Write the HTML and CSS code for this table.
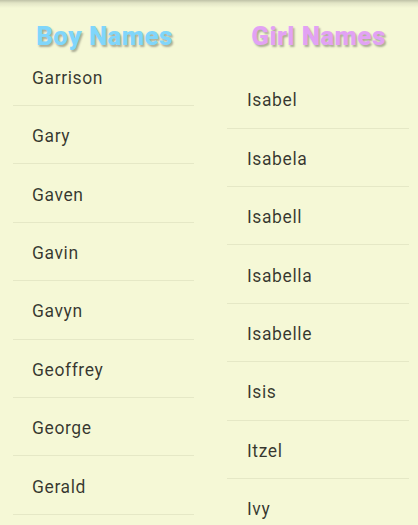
FILE: index.html
```html
<!DOCTYPE html>
<html>
<head>
<meta charset="utf-8">
<link rel="stylesheet" href="styles.css">
</head>
<body>
<div class="page">
  <section class="col col-boys">
    <h2 class="title title-boys">Boy Names</h2>
    <ul class="list">
      <li class="row">Garrison</li>
      <li class="row">Gary</li>
      <li class="row">Gaven</li>
      <li class="row">Gavin</li>
      <li class="row">Gavyn</li>
      <li class="row">Geoffrey</li>
      <li class="row">George</li>
      <li class="row">Gerald</li>
    </ul>
  </section>
  <section class="col col-girls">
    <h2 class="title title-girls">Girl Names</h2>
    <ul class="list">
      <li class="row">Isabel</li>
      <li class="row">Isabela</li>
      <li class="row">Isabell</li>
      <li class="row">Isabella</li>
      <li class="row">Isabelle</li>
      <li class="row">Isis</li>
      <li class="row">Itzel</li>
      <li class="row">Ivy</li>
    </ul>
  </section>
</div>
</body>
</html>
```
FILE: styles.css
```css
html, body {
  margin: 0;
  padding: 0;
}
body {
  width: 418px;
  height: 525px;
  overflow: hidden;
  font-family: Roboto, "Liberation Sans", sans-serif;
  background: linear-gradient(to bottom, rgba(0,0,0,0.22) 0px, rgba(0,0,0,0.08) 3px, rgba(0,0,0,0) 8px), #f5f8d6;
}
.page {
  display: grid;
  grid-template-columns: 209px 209px;
}
.col {
  display: flex;
  flex-direction: column;
}
.title {
  margin: 0;
  font-size: 26px;
  font-weight: 900;
  letter-spacing: 0.4px;
  line-height: 30px;
  text-align: center;
  text-shadow: 1.5px 1.5px 2px rgba(0,0,0,0.3);
}
.col-boys .title {
  padding-top: 21px;
  padding-left: 0;
}
.col-girls .title {
  padding-top: 21px;
  padding-left: 10px;
}
.title-boys { color: #80d6fb; }
.title-girls { color: #e2a2f4; }
.list {
  list-style: none;
  margin: 0;
  padding: 0;
}
.col-boys .list {
  margin: -3.4px 15px 0 13px;
}
.col-girls .list {
  margin: 19.2px 9px 0 18px;
}
.row {
  box-sizing: border-box;
  height: 58.4px;
  display: flex;
  align-items: center;
  padding-top: 3px;
  padding-left: 19px;
  font-size: 17.5px;
  letter-spacing: 0.6px;
  color: rgba(0,0,0,0.78);
  border-bottom: 1px solid #e5e8c6;
}
.col-girls .row {
  padding-left: 20px;
}
```
